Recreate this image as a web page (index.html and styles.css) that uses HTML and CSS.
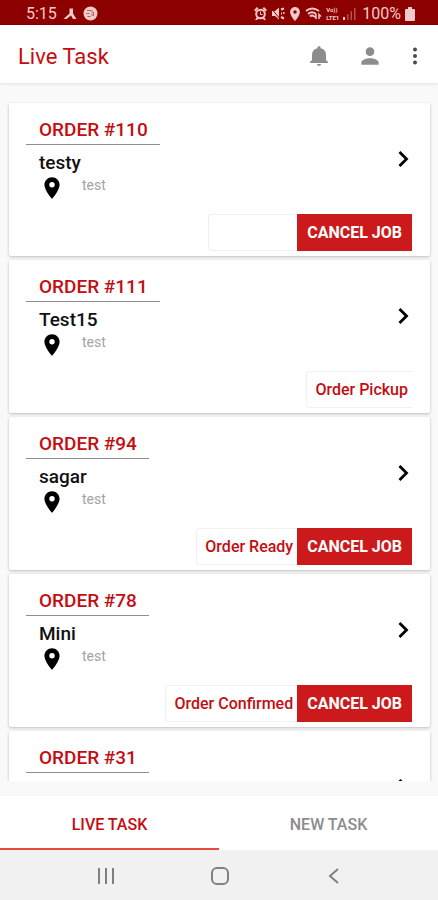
FILE: index.html
```html
<!DOCTYPE html>
<html lang="en">
<head>
    <meta charset="UTF-8">
    <meta name="viewport" content="width=device-width, initial-scale=1.0">
    <title>Live Task</title>
    <link rel="stylesheet" href="styles.css">
</head>
<body>
    <!-- shared icons -->
    <svg class="sprite" aria-hidden="true">
        <symbol id="pin" viewBox="0 0 24 24">
            <path d="M12 2C8.13 2 5 5.13 5 9c0 5.25 7 13 7 13s7-7.75 7-13c0-3.87-3.13-7-7-7zm0 9.5a2.5 2.5 0 1 1 0-5 2.5 2.5 0 0 1 0 5z"/>
        </symbol>
        <symbol id="chevron" viewBox="0 0 24 24">
            <path d="M8.500 5l7 7-7 7" fill="none" stroke="#000" stroke-width="2.800"/>
        </symbol>
    </svg>

    <div class="status-bar">
        <span class="time">5:15</span>
        <svg width="14" height="14" viewBox="0 0 14 14"><path d="M6.500 1.500h3.500v5L13.500 12H10L8 8.500 3.500 12H.5l6-5.500z"/></svg>
        <svg class="ball" width="15" height="15" viewBox="0 0 15 15"><circle cx="7.500" cy="7.500" r="7"/><path d="M4 4.500h4M3.500 7.500h3M4.500 10.500h3M9 4v3M8 9h3M10.500 6v4" stroke="#b86060" fill="none"/></svg>
        <div class="status-right">
            <svg width="13" height="13" viewBox="0 0 13 13"><circle cx="6.500" cy="7" r="4.300" fill="none" stroke="#f3caca" stroke-width="2"/><path d="M0 3l3-3 1.500 1.500-3 3zM13 3l-3-3-1.500 1.500 3 3zM1 13l2-3 2 1-2 2zM12 13l-2-3-2 1 2 2z"/><path d="M6.500 4.500V7.500h2" fill="none" stroke="#f3caca"/></svg>
            <svg width="14" height="13" viewBox="0 0 14 13"><path d="M1 4h3l4-3.500v12L4 9H1z"/><path d="M0 1l9 11" stroke="#8d0000"/><path d="M10 2.500l3-1M10 6.500h1M12 6h1.500M10 10l3 1.500" fill="none" stroke="#f3caca" stroke-width="2"/></svg>
            <svg width="12" height="14" viewBox="5 2 14 20"><use href="#pin" width="24" height="24"/></svg>
            <svg width="17" height="14" viewBox="0 0 17 14"><path d="M1 4q6-5 13 0M3 7q4-3.500 8 0M5 9.500q2-2 4 0" fill="none" stroke="#f3caca" stroke-width="1.800"/><path d="M11 7v4l-2-2M14 12V7.500l2 2" fill="none" stroke="#f3caca" stroke-width="1.500"/></svg>
            <span class="volte"><span>Vo))</span><span>LTE1</span></span>
            <svg width="13" height="13" viewBox="0 0 13 13"><path d="M0 10h2v3H0z"/><path d="M4 7h1.500v6H4zM7.500 4H9v9H7.500zM11 1h1.500v12H11z" opacity=".4"/></svg>
            <span class="percent">100%</span>
            <svg width="10" height="14" viewBox="0 0 10 14"><path d="M3 0h4v2h2q1 0 1 1v10q0 1-1 1H1q-1 0-1-1V3q0-1 1-1h2z"/></svg>
        </div>
    </div>

    <header class="toolbar">
        <h1>Live Task</h1>
        <button class="icon-btn" aria-label="Notifications">
            <svg width="24" height="24" viewBox="0 0 24 24"><path d="M12 22c1.100 0 2-.900 2-2h-4c0 1.100.900 2 2 2zm7-6v-5c0-3.500-2-6-5.500-6.700V3.500a1.500 1.500 0 0 0-3 0v.800C7 5 5 7.500 5 11v5l-2 2v1h18v-1z"/></svg>
        </button>
        <button class="icon-btn" aria-label="Profile">
            <svg width="26" height="26" viewBox="0 0 24 24"><path d="M12 12a4 4 0 1 0 0-8 4 4 0 0 0 0 8zm0 2c-2.670 0-8 1.340-8 4v2h16v-2c0-2.660-5.330-4-8-4z"/></svg>
        </button>
        <button class="icon-btn menu-btn" aria-label="More">
            <svg width="6" height="20" viewBox="0 0 6 20"><circle cx="3" cy="3.500" r="2"/><circle cx="3" cy="10" r="2"/><circle cx="3" cy="16.500" r="2"/></svg>
        </button>
    </header>

    <main class="task-list">
        <article class="card">
            <h2>ORDER #110</h2>
            <div class="card-body">
                <div>
                    <h3>testy</h3>
                    <p class="address"><svg><use href="#pin"/></svg>test</p>
                </div>
                <a href="#" class="open" aria-label="Open order 110"><svg><use href="#chevron"/></svg></a>
            </div>
            <div class="actions">
                <span class="state"></span>
                <button class="cancel">CANCEL JOB</button>
            </div>
        </article>

        <article class="card">
            <h2>ORDER #111</h2>
            <div class="card-body">
                <div>
                    <h3>Test15</h3>
                    <p class="address"><svg><use href="#pin"/></svg>test</p>
                </div>
                <a href="#" class="open" aria-label="Open order 111"><svg><use href="#chevron"/></svg></a>
            </div>
            <div class="actions">
                <span class="state">Order Pickup</span>
            </div>
        </article>

        <article class="card">
            <h2>ORDER #94</h2>
            <div class="card-body">
                <div>
                    <h3>sagar</h3>
                    <p class="address"><svg><use href="#pin"/></svg>test</p>
                </div>
                <a href="#" class="open" aria-label="Open order 94"><svg><use href="#chevron"/></svg></a>
            </div>
            <div class="actions">
                <span class="state">Order Ready</span>
                <button class="cancel">CANCEL JOB</button>
            </div>
        </article>

        <article class="card">
            <h2>ORDER #78</h2>
            <div class="card-body">
                <div>
                    <h3>Mini</h3>
                    <p class="address"><svg><use href="#pin"/></svg>test</p>
                </div>
                <a href="#" class="open" aria-label="Open order 78"><svg><use href="#chevron"/></svg></a>
            </div>
            <div class="actions">
                <span class="state">Order Confirmed</span>
                <button class="cancel">CANCEL JOB</button>
            </div>
        </article>

        <article class="card">
            <h2>ORDER #31</h2>
            <div class="card-body">
                <div></div>
                <a href="#" class="open" aria-label="Open order 31"><svg><use href="#chevron"/></svg></a>
            </div>
        </article>
    </main>

    <nav class="tabs">
        <button class="tab active">LIVE TASK</button>
        <button class="tab">NEW TASK</button>
    </nav>

    <div class="nav-bar">
        <button aria-label="Recent apps"><svg width="20" height="20" viewBox="0 0 20 20"><path d="M3 2v16M10 2v16M17 2v16"/></svg></button>
        <button aria-label="Home"><svg width="20" height="20" viewBox="0 0 20 20"><rect x="2" y="2" width="16" height="16" rx="5"/></svg></button>
        <button aria-label="Back"><svg width="20" height="20" viewBox="0 0 20 20"><path d="M14 3l-8 7 8 7"/></svg></button>
    </div>
</body>
</html>
```
FILE: styles.css
```css
* {
    box-sizing: border-box;
}
body {
    margin: 0;
    height: 100vh;
    display: flex;
    flex-direction: column;
    overflow: hidden;
    font-family: Roboto, sans-serif;
    background-color: #f9f9f9;
}
h1, h2, h3, p {
    margin: 0;
}
button {
    font-family: inherit;
    border: none;
    padding: 0;
    background: none;
    cursor: pointer;
}
svg {
    display: block;
    flex: none;
}
.sprite {
    position: absolute;
    width: 0;
    height: 0;
}
.status-bar {
    flex: none;
    display: flex;
    align-items: center;
    gap: 6px;
    height: 25px;
    padding: 2px 23px 0 26px;
    background-color: #8d0000;
    color: #f3caca;
    fill: #f3caca;
    font-size: 16px;
}
.status-right {
    display: flex;
    align-items: center;
    gap: 4px;
    margin-left: auto;
}
.volte {
    display: flex;
    flex-direction: column;
    font-size: 6px;
    line-height: 8px;
    font-weight: bold;
}
.percent {
    margin-left: 2px;
}
.toolbar {
    flex: none;
    display: flex;
    align-items: center;
    height: 58px;
    padding: 4px 20px 0 18px;
    background-color: #fff;
    box-shadow: 0 1px 3px rgba(0, 0, 0, 0.1);
}
.toolbar h1 {
    flex: 1;
    font-size: 22px;
    font-weight: normal;
    color: #c40d12;
}
.icon-btn {
    margin-left: 26px;
    fill: #8c8c8c;
}
.menu-btn {
    margin-left: 29px;
    fill: #4a4a4a;
}
.task-list {
    flex: 1;
    min-height: 0;
    overflow: hidden;
    display: flex;
    flex-direction: column;
    gap: 4px;
    margin-top: 4px;
    padding: 16px 8px 0 9px;
}
.card {
    flex: none;
    height: 153px;
    display: flex;
    flex-direction: column;
    align-items: flex-start;
    padding: 15px 18px 5px 17px;
    background-color: #fff;
    border-radius: 2px;
    box-shadow: 0 1px 3px rgba(0, 0, 0, 0.25);
}
.card h2 {
    padding: 0 12px 2px 13px;
    border-bottom: 1px solid #8f8f8f;
    font-size: 19px;
    line-height: 24px;
    font-weight: 500;
    color: #c40d12;
}
.card-body {
    flex: 1;
    width: 100%;
    display: flex;
    justify-content: space-between;
    padding-left: 13px;
}
.card h3 {
    padding-top: 6px;
    font-size: 19px;
    line-height: 24px;
    font-weight: 500;
    color: #111;
}
.address {
    display: flex;
    gap: 17px;
    font-size: 14px;
    line-height: 20px;
    color: #a3a3a3;
}
.address svg {
    width: 26px;
    height: 26px;
    fill: #000;
}
.open {
    height: 24px;
    margin: 2px -3px 0 0;
}
.open svg {
    width: 24px;
    height: 24px;
}
.actions {
    align-self: flex-end;
    display: flex;
    height: 37px;
}
.state {
    min-width: 89px;
    padding: 0 4px 0 8px;
    border: 1px solid #f0f0f0;
    border-right: none;
    border-radius: 4px 0 0 4px;
    font-size: 16px;
    line-height: 36px;
    font-weight: 500;
    color: #c40d12;
}
.cancel {
    padding: 0 10px;
    background-color: #cc1a1c;
    color: #fff;
    font-size: 16px;
    font-weight: bold;
}
.tabs {
    flex: none;
    display: flex;
    height: 54px;
    margin-top: 15px;
    background-color: #fff;
}
.tab {
    flex: 1;
    padding-top: 4px;
    border-bottom: 2px solid transparent;
    font-size: 16px;
    font-weight: 500;
    color: #8c8c8c;
}
.tab.active {
    color: #c40d12;
    border-bottom-color: #e8483c;
}
.nav-bar {
    flex: none;
    display: flex;
    justify-content: center;
    gap: 94px;
    height: 50px;
    padding: 2px 0 0 2px;
    background-color: #f1f1f1;
}
.nav-bar svg {
    fill: none;
    stroke: #808080;
    stroke-width: 2;
}
```
